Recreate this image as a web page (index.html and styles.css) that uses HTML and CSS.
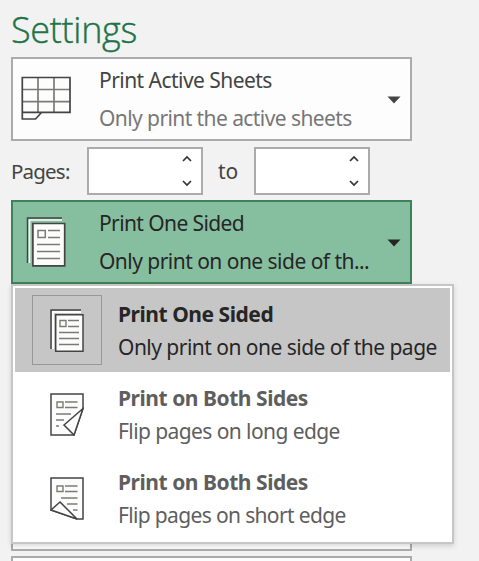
FILE: index.html
```html
<!DOCTYPE html>
<html lang="en">
<head>
<meta charset="utf-8">
<title>Print settings</title>
<link rel="stylesheet" href="styles.css">
</head>
<body>
<main class="settings">
  <h1 class="title">Settings</h1>
  <button class="picker">
    <svg class="picker-icon" width="54" height="50" viewBox="0 0 54 50">
      <path d="M20 6.500V41.500M36 6.500V41.500M4 18.500H52M4 30.700H52" fill="none" stroke="#7b7b76" stroke-width="1.700"/>
      <path d="M4.300 41.300V6.500H52V41.300ZM4.300 41.300V48H17.500L23.500 41.500" fill="none" stroke="#444" stroke-width="1.700"/>
    </svg>
    <span class="picker-text"><span class="name sheets">Print Active Sheets</span><span class="hint sheets-hint">Only print the active sheets</span></span>
    <svg class="caret" width="14" height="8" viewBox="0 0 14 8"><path d="M.5.500H13.500L7 7.500Z"/></svg>
  </button>
  <div class="range">
    <span class="range-label">Pages:</span>
    <span class="spinner"><svg width="10" height="36" viewBox="0 0 10 36"><path d="M1 6L5 2L9 6M1 26L5 30L9 26"/></svg></span>
    <span class="range-to">to</span>
    <span class="spinner"><svg width="10" height="36" viewBox="0 0 10 36"><path d="M1 6L5 2L9 6M1 26L5 30L9 26"/></svg></span>
  </div>
  <div class="dropdown">
    <button class="picker open">
      <svg class="picker-icon pages-icon" width="40" height="51" viewBox="0 0 40 51">
        <path d="M1.500 47V2H36" fill="none" stroke="#444" stroke-width="1.500"/>
        <path d="M3.500 47V4H36" fill="none" stroke="#fcfcfc" stroke-width="1.700"/>
        <path d="M6.900 7.500H38.700V49.800H6.900Z" fill="#fcfcfc" stroke="#444" stroke-width="1.700"/>
        <path d="M12 14.500H19.300V21.500H12ZM22 14.500H34M22 21.500H34M11 28.500H34M11 35.500H34M11 42.500H34" fill="none" stroke="#7b7b76" stroke-width="1.500"/>
      </svg>
      <span class="picker-text"><span class="name sided">Print One Sided</span><span class="hint sided-hint">Only print on one side of th...</span></span>
      <svg class="caret" width="14" height="8" viewBox="0 0 14 8"><path d="M.5.500H13.500L7 7.500Z"/></svg>
    </button>
    <div class="menu">
      <div class="item selected">
        <span class="thumb"><svg width="34" height="43" viewBox="0 0 34 43">
          <path d="M1 40V1H31" fill="none" stroke="#444" stroke-width="1.500"/>
          <path d="M3 40V3H31" fill="none" stroke="#fcfcfc" stroke-width="2"/>
          <path d="M5.700 5.700H33V42.200H5.700Z" fill="#fcfcfc" stroke="#444" stroke-width="1.500"/>
          <path d="M10 11.500H16V17.500H10ZM18 11.500H29M18 17.500H29M9 23.500H29M9 29.500H29M9 35.500H29" fill="none" stroke="#7b7b76" stroke-width="1.400"/>
        </svg></span>
        <span class="item-text"><b class="bold-one">Print One Sided</b><span class="full">Only print on one side of the page</span></span>
      </div>
      <div class="item">
        <span class="thumb"><svg width="34" height="43" viewBox="0 0 34 43">
          <path d="M1 1H33V15.500L24 42H1Z" fill="#fcfcfc" stroke="#444" stroke-width="1.500"/>
          <path d="M7 9H13V14.500H7ZM15 9H27.500M15 14.500H27.500M6 21H21M6 27H14M6 33H9" fill="none" stroke="#7b7b76" stroke-width="1.400"/>
          <path d="M33 15.500L14 32L24 42Z" fill="#fcfcfc" stroke="#444" stroke-width="1.500"/>
        </svg></span>
        <span class="item-text"><b class="bold-both">Print on Both Sides</b><span class="long">Flip pages on long edge</span></span>
      </div>
      <div class="item">
        <span class="thumb"><svg width="34" height="43" viewBox="0 0 34 43">
          <path d="M1 33V1H33V42H27Z" fill="#fcfcfc" stroke="#444" stroke-width="1.500"/>
          <path d="M7 9H13V14.500H7ZM15 9H27.500M15 14.500H27.500M11 21H27.500M17 27H27.500M23 33H27.500" fill="none" stroke="#7b7b76" stroke-width="1.400"/>
          <path d="M1 33L10 25L27 42Z" fill="#fcfcfc" stroke="#444" stroke-width="1.500"/>
        </svg></span>
        <span class="item-text"><b class="bold-both">Print on Both Sides</b><span class="short">Flip pages on short edge</span></span>
      </div>
    </div>
  </div>
  <div class="picker below"></div>
  <div class="picker last"></div>
</main>
</body>
</html>
```
FILE: styles.css
```css
* { box-sizing: border-box; }
body {
  margin: 0;
  height: 561px;
  overflow: hidden;
  background: #f2f2f2;
  color: #444;
  font: 21px/38px "Noto Sans", "Open Sans", sans-serif;
  white-space: nowrap;
}
.settings { width: 401px; margin-left: 11px; }
.title {
  height: 57px;
  margin: 0;
  color: #217346;
  font: 300 36px/60px "Open Sans", "Noto Sans", sans-serif;
  letter-spacing: -.3px;
  -webkit-text-stroke: .4px #217346;
}
.picker {
  display: flex;
  align-items: flex-start;
  width: 401px;
  height: 84px;
  padding: 0;
  border: 2px solid #ababab;
  background: #fdfdfd;
  color: #444;
  font: inherit;
  text-align: left;
}
.picker-icon { flex: none; margin: 12px 27px 0 5px; }
.pages-icon { margin: 14px 33px 0 13px; }
.picker-text { display: flex; flex-direction: column; width: 288px; padding-top: 2px; }
.hint { color: #777; }
.caret { flex: none; margin-top: 37px; fill: #444; }
.range { display: flex; align-items: center; height: 48px; margin: 6px 0 5px; }
.range-label { width: 76px; font-size: 20.5px; letter-spacing: -.8px; }
.range-to { width: 51px; padding-left: 15px; }
.spinner {
  display: flex;
  justify-content: flex-end;
  width: 116px;
  height: 48px;
  padding: 6px 9px 0 0;
  border: 2px solid #ababab;
  background: #fff;
}
.spinner svg { fill: none; stroke: #333; stroke-width: 1.7; }
.dropdown { position: relative; }
.open { border-color: #3f8159; background: #86bfa0; color: #262626; }
.open .hint { color: #262626; }
.open .caret { fill: #262626; }
.menu {
  position: absolute;
  top: 84px;
  left: 0;
  z-index: 1;
  width: 443px;
  height: 260px;
  padding: 2px;
  border: 2px solid #c6c6c6;
  background: #fff;
  box-shadow: 0 2px 5px rgba(0,0,0,.15);
}
.item { display: flex; width: 435px; height: 84px; color: #5e5e5e; line-height: 33px; }
.thumb {
  display: flex;
  align-items: center;
  justify-content: center;
  width: 70px;
  height: 70px;
  margin: 7px 16px 0 17px;
}
.item-text { display: flex; flex-direction: column; padding-top: 10px; }
.selected { background: #c6c6c6; color: #262626; }
.selected .thumb { border: 1px solid #979797; }
.below { margin-top: 6px; height: 261px; }
.last { margin-top: 5px; height: 5px; border-bottom: 0; }
.sheets { letter-spacing: -.54px; }
.sheets-hint { letter-spacing: -.58px; }
.sided { letter-spacing: -.6px; }
.sided-hint { letter-spacing: -.53px; }
.full { letter-spacing: -.52px; }
.long { letter-spacing: -.58px; }
.short { letter-spacing: -.65px; }
.bold-one, .bold-both { letter-spacing: -.46px; }
```
